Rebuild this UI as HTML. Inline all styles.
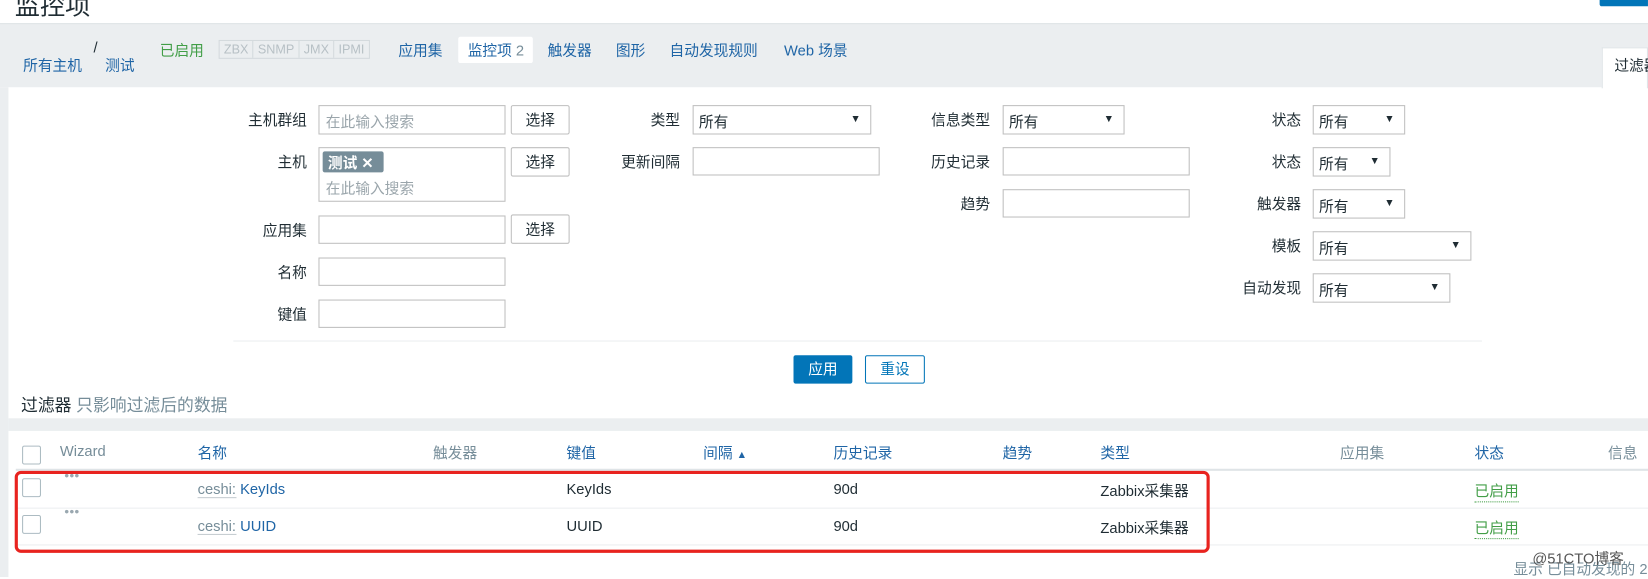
<!DOCTYPE html>
<html><head><meta charset="utf-8"><style>
*{box-sizing:border-box;margin:0;padding:0}
html,body{width:1648px;height:577px;overflow:hidden;background:#fff}
body{font-family:"Liberation Sans","Noto Sans CJK SC",sans-serif;font-size:14px;color:#1f2c33}
#w{position:absolute;left:0;top:0;width:1568px;height:549px;transform:scale(1.051);transform-origin:0 0}
.a{position:absolute;white-space:nowrap}
.l{color:#1f65a6}
.g{color:#768d99}
.gr{color:#429e47}
.inp{position:absolute;border:1px solid #bfbfbf;background:#fff;height:28px}
.btn{position:absolute;border:1px solid #bfbfbf;background:#fff;height:28px;width:56px;text-align:center;line-height:26px;border-radius:2px}
.sel{position:absolute;border:1px solid #bfbfbf;background:#fff;height:28px;padding:5px 0 0 5px}
.sel:after{content:"▼";position:absolute;right:9px;top:7px;font-size:10px}
.lbl{position:absolute;text-align:right;width:120px;line-height:28px}
.cb{position:absolute;width:18px;height:18px;border:1px solid #acbbc2;border-radius:2px;background:#fff}
.dots{position:absolute;color:#9aa8b0;font-size:8px;letter-spacing:0px}
</style></head><body><div id="w">
<div class="a" style="left:14px;top:-14px;font-size:24px">监控项</div>
<div class="a" style="left:1522px;top:0;width:46px;height:6px;background:#0275b8;border-radius:0 0 0 2px"></div>
<div class="a" style="left:0;top:22px;width:1568px;height:61px;background:#ebeef0;border-top:1px solid #dfe4e7"></div>
<div class="a" style="left:0;top:83px;width:8px;height:466px;background:#ebeef0"></div>
<div class="a" style="left:89px;top:37px">/</div>
<div class="a l" style="left:22px;top:52px">所有主机</div>
<div class="a l" style="left:100px;top:52px">测试</div>
<div class="a gr" style="left:152px;top:38px">已启用</div>
<div class="a" style="left:208px;top:38px;height:18px;border:1px solid #d4dadd;color:#b7c0c5;font-size:12px;line-height:16px;display:flex"><span style="padding:0 4px;border-right:1px solid #d4dadd">ZBX</span><span style="padding:0 4px;border-right:1px solid #d4dadd">SNMP</span><span style="padding:0 4px;border-right:1px solid #d4dadd">JMX</span><span style="padding:0 4px">IPMI</span></div>
<div class="a l" style="left:379px;top:38px">应用集</div>
<div class="a" style="left:436px;top:35px;width:71px;height:25px;background:#fff;border-radius:2px"></div>
<div class="a l" style="left:445px;top:38px">监控项 <span class="g">2</span></div>
<div class="a l" style="left:521px;top:38px">触发器</div>
<div class="a l" style="left:586px;top:38px">图形</div>
<div class="a l" style="left:637px;top:38px">自动发现规则</div>
<div class="a l" style="left:746px;top:38px">Web 场景</div>
<div class="a" style="left:1524px;top:45px;width:44px;height:39px;background:#fff;border:1px solid #dfe4e7;border-bottom:none"></div>
<div class="a" style="left:1536px;top:52px">过滤器</div>

<div class="lbl" style="left:172px;top:100px">主机群组</div>
<div class="inp" style="left:303px;top:100px;width:178px;padding:5px 6px;color:#9aa5ab">在此输入搜索</div>
<div class="btn" style="left:486px;top:100px">选择</div>
<div class="lbl" style="left:172px;top:140px">主机</div>
<div class="inp" style="left:303px;top:140px;width:178px;height:52px"></div>
<div class="a" style="left:307px;top:144px;width:58px;height:20px;background:#768d99;color:#fff;border-radius:2px;padding:1px 5px;font-weight:bold">测试 ✕</div>
<div class="a" style="left:310px;top:169px;color:#9aa5ab">在此输入搜索</div>
<div class="btn" style="left:486px;top:140px">选择</div>
<div class="lbl" style="left:172px;top:205px">应用集</div>
<div class="inp" style="left:303px;top:205px;width:178px;height:27px"></div>
<div class="btn" style="left:486px;top:204px">选择</div>
<div class="lbl" style="left:172px;top:245px">名称</div>
<div class="inp" style="left:303px;top:245px;width:178px;height:27px"></div>
<div class="lbl" style="left:172px;top:285px">键值</div>
<div class="inp" style="left:303px;top:285px;width:178px;height:27px"></div>

<div class="lbl" style="left:527px;top:100px">类型</div>
<div class="sel" style="left:659px;top:100px;width:170px">所有</div>
<div class="lbl" style="left:527px;top:140px">更新间隔</div>
<div class="inp" style="left:659px;top:140px;width:178px;height:27px"></div>

<div class="lbl" style="left:822px;top:100px">信息类型</div>
<div class="sel" style="left:954px;top:100px;width:116px">所有</div>
<div class="lbl" style="left:822px;top:140px">历史记录</div>
<div class="inp" style="left:954px;top:140px;width:178px;height:27px"></div>
<div class="lbl" style="left:822px;top:180px">趋势</div>
<div class="inp" style="left:954px;top:180px;width:178px;height:27px"></div>

<div class="lbl" style="left:1118px;top:100px">状态</div>
<div class="sel" style="left:1249px;top:100px;width:88px">所有</div>
<div class="lbl" style="left:1118px;top:140px">状态</div>
<div class="sel" style="left:1249px;top:140px;width:74px">所有</div>
<div class="lbl" style="left:1118px;top:180px">触发器</div>
<div class="sel" style="left:1249px;top:180px;width:88px">所有</div>
<div class="lbl" style="left:1118px;top:220px">模板</div>
<div class="sel" style="left:1249px;top:220px;width:151px">所有</div>
<div class="lbl" style="left:1118px;top:260px">自动发现</div>
<div class="sel" style="left:1249px;top:260px;width:131px">所有</div>

<div class="a" style="left:222px;top:324px;width:1188px;height:1px;background:#ebeef0"></div>
<div class="a" style="left:755px;top:338px;width:56px;height:27px;background:#0275b8;color:#fff;text-align:center;line-height:27px;border-radius:2px">应用</div>
<div class="a" style="left:823px;top:338px;width:57px;height:27px;border:1px solid #0275b8;color:#0275b8;text-align:center;line-height:25px;border-radius:2px">重设</div>
<div class="a" style="left:20px;top:372px;font-size:16px">过滤器 <span class="g">只影响过滤后的数据</span></div>

<div class="a" style="left:8px;top:398px;width:1560px;height:12px;background:#ebeef0"></div>
<div class="cb" style="left:21px;top:424px"></div>
<div class="a g" style="left:57px;top:421px">Wizard</div>
<div class="a l" style="left:188px;top:421px">名称</div>
<div class="a g" style="left:412px;top:421px">触发器</div>
<div class="a l" style="left:539px;top:421px">键值</div>
<div class="a l" style="left:669px;top:421px">间隔 <span style="font-size:10px">▲</span></div>
<div class="a l" style="left:793px;top:421px">历史记录</div>
<div class="a l" style="left:954px;top:421px">趋势</div>
<div class="a l" style="left:1047px;top:421px">类型</div>
<div class="a g" style="left:1275px;top:421px">应用集</div>
<div class="a l" style="left:1403px;top:421px">状态</div>
<div class="a g" style="left:1530px;top:421px">信息</div>
<div class="a" style="left:15px;top:446px;width:1553px;height:2px;background:#dfe4e7"></div>
<div class="a" style="left:15px;top:483px;width:1553px;height:1px;background:#ebeef0"></div>
<div class="a" style="left:15px;top:518px;width:1553px;height:1px;background:#ebeef0"></div>

<div class="cb" style="left:21px;top:455px"></div>
<div class="dots" style="left:61px;top:448px">●●●</div>
<div class="a" style="left:188px;top:457px"><span class="g" style="border-bottom:1px solid #c5ccd0">ceshi:</span> <span class="l">KeyIds</span></div>
<div class="a" style="left:539px;top:457px">KeyIds</div>
<div class="a" style="left:793px;top:457px">90d</div>
<div class="a" style="left:1047px;top:457px">Zabbix采集器</div>
<div class="a gr" style="left:1403px;top:457px;border-bottom:1px dotted #429e47">已启用</div>

<div class="cb" style="left:21px;top:490px"></div>
<div class="dots" style="left:61px;top:482px">●●●</div>
<div class="a" style="left:188px;top:492px"><span class="g" style="border-bottom:1px solid #c5ccd0">ceshi:</span> <span class="l">UUID</span></div>
<div class="a" style="left:539px;top:492px">UUID</div>
<div class="a" style="left:793px;top:492px">90d</div>
<div class="a" style="left:1047px;top:492px">Zabbix采集器</div>
<div class="a gr" style="left:1403px;top:492px;border-bottom:1px dotted #429e47">已启用</div>

<div class="a" style="left:14px;top:448px;width:1137px;height:78px;border:3px solid #e8231f;border-radius:6px"></div>
<div class="a g" style="left:1440px;top:531px">显示 已自动发现的 2</div>
<div class="a" style="left:1458px;top:521px;color:#555;font-size:14px">@51CTO博客</div>
</div></body></html>
